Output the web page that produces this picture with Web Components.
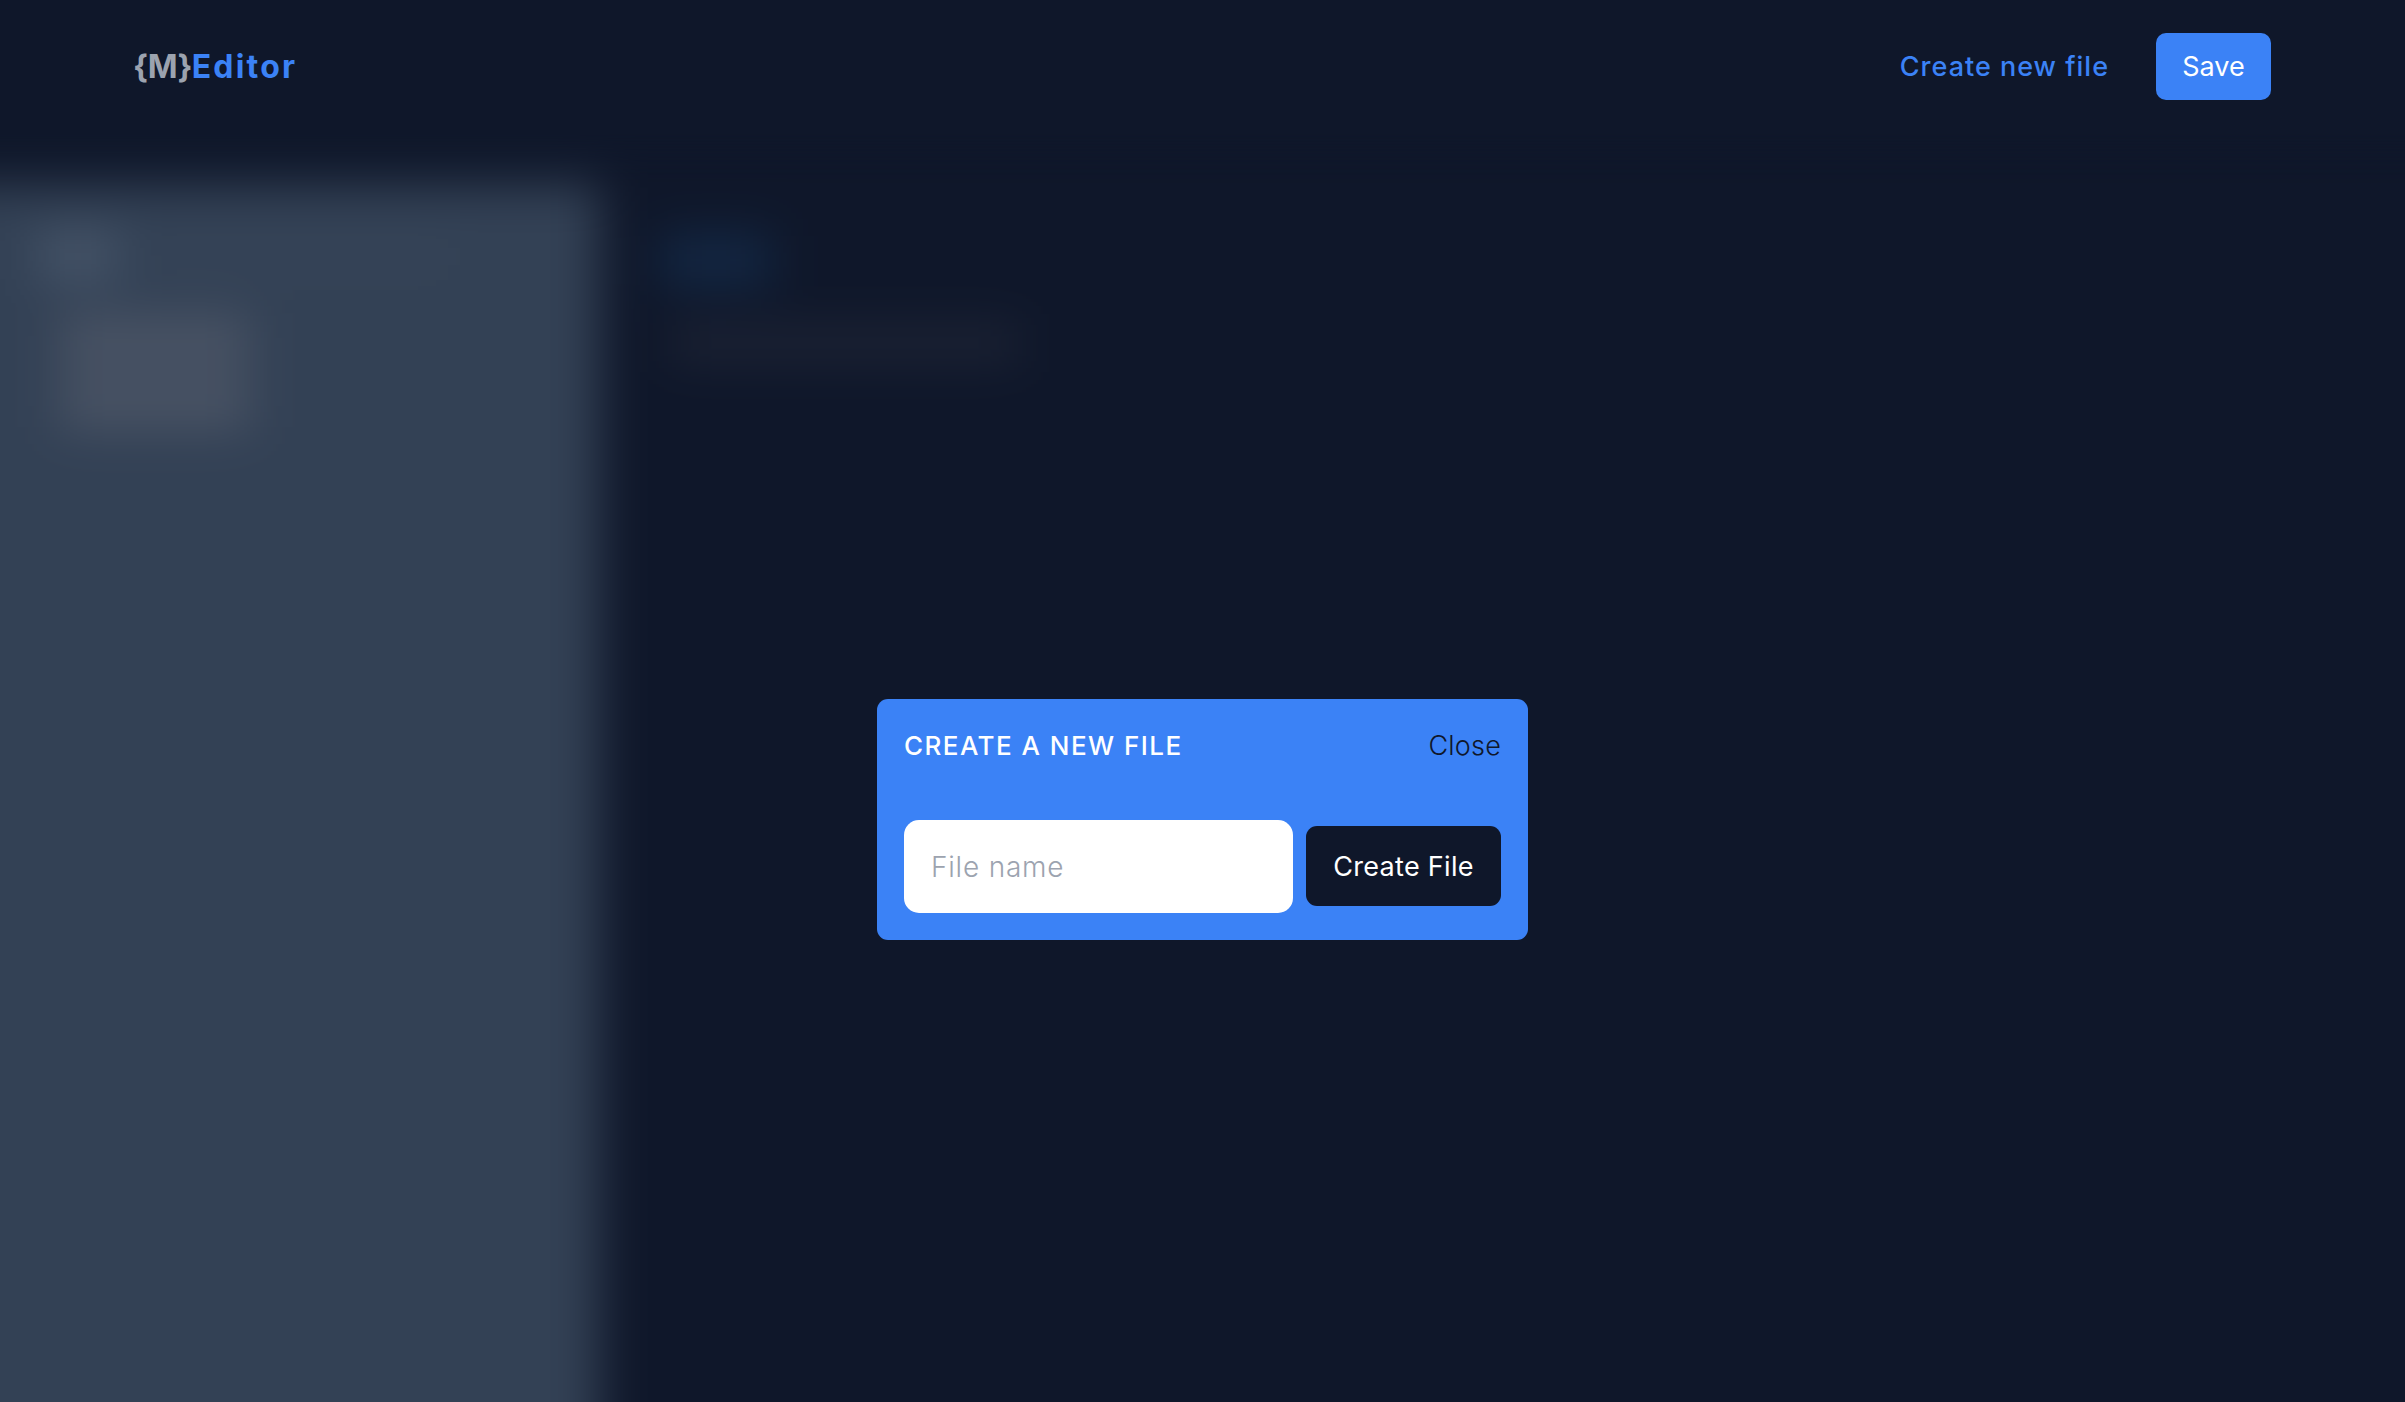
<!DOCTYPE html>
<html lang="en">
<head>
<meta charset="utf-8">
<title>MEditor</title>
<style>
  html, body { margin: 0; height: 100%; background: #0f172a; overflow: hidden; }
  body { font-family: Inter, "Liberation Sans", sans-serif; }
</style>
</head>
<body>
<editor-app>
  <editor-header></editor-header>
  <editor-workspace></editor-workspace>
  <new-file-modal></new-file-modal>
</editor-app>

<script>
// page shell
class EditorApp extends HTMLElement {
  constructor() {
    super();
    this.attachShadow({ mode: 'open' });
    this.shadowRoot.innerHTML = `
      <style>
        :host { display: block; position: relative; height: 1402px; overflow: hidden; background: #0f172a; }
      </style>
      <slot></slot>
    `;
  }
}

// top bar with logo and actions
class EditorHeader extends HTMLElement {
  constructor() {
    super();
    this.attachShadow({ mode: 'open' });
    this.shadowRoot.innerHTML = `
      <style>
        :host { display: flex; position: relative; z-index: 1; align-items: center; justify-content: space-between; height: 134px; box-sizing: border-box; padding: 0 134px 1px 133px; background: #0f172a; }
        .logo { font-size: 32px; font-weight: 700; color: #3b82f6; letter-spacing: 2.2px; }
        .logo span { color: #9ca3af; letter-spacing: -.75px; }
        nav { display: flex; align-items: center; gap: 47px; }
        a { font-size: 27px; font-weight: 500; color: #3b82f6; text-decoration: none; letter-spacing: 1px; }
        button { font: inherit; font-size: 27px; color: #fff; background: #3b82f6; border: 0; border-radius: 10px; width: 115px; height: 67px; padding: 0; }
      </style>
      <div class="logo"><span>{M}</span>Editor</div>
      <nav>
        <a href="#">Create new file</a>
        <button>Save</button>
      </nav>
    `;
  }
}

// sidebar and preview, blurred behind the dialog. runs past the page edges
// so the blur does not fade out there
class EditorWorkspace extends HTMLElement {
  constructor() {
    super();
    this.attachShadow({ mode: 'open' });
    this.shadowRoot.innerHTML = `
      <style>
        :host { display: grid; grid-template-columns: 719px 1fr; box-sizing: border-box; height: 1388px; padding-top: 50px; margin: 0 -120px; background: #0f172a; filter: blur(24px); }
        .side { background: #334155; padding: 48px 0 0 158px; display: flex; flex-direction: column; }
        .head { display: flex; gap: 30px; align-items: center; }
        .title { width: 80px; height: 48px; background: #465569; }
        .rule { width: 300px; height: 16px; background: #384659; }
        .rows { display: flex; flex-direction: column; gap: 12px; margin: 36px 0 0 22px; }
        .rows i { display: block; width: 190px; height: 50px; background: #4a5465; }
        .main { padding: 51px 0 0 61px; display: flex; flex-direction: column; gap: 43px; }
        .badge { width: 112px; height: 50px; background: #132845; }
        .line { width: 350px; height: 30px; margin-left: 10px; background: #1f2536; }
      </style>
      <div class="side">
        <div class="head"><div class="title"></div><div class="rule"></div></div>
        <div class="rows"><i></i><i></i></div>
      </div>
      <div class="main">
        <div class="badge"></div>
        <div class="line"></div>
      </div>
    `;
  }
}

// dialog over the blurred workspace
class NewFileModal extends HTMLElement {
  constructor() {
    super();
    this.attachShadow({ mode: 'open' });
    this.shadowRoot.innerHTML = `
      <style>
        :host { position: absolute; top: 134px; left: 0; right: 0; bottom: 0; display: flex; justify-content: center; align-items: flex-start; padding-top: 565px; box-sizing: border-box; }
        .card { width: 651px; height: 241px; box-sizing: border-box; padding: 0 27px; background: #3b82f6; border-radius: 11px; }
        .top { display: flex; justify-content: space-between; align-items: center; height: 92px; }
        h2 { margin: 0; font-size: 26px; font-weight: 500; color: #fff; letter-spacing: 1.45px; }
        .close { font-size: 27px; font-weight: 300; color: #0f172a; letter-spacing: .2px; }
        .row { display: flex; align-items: center; gap: 13px; margin-top: 29px; }
        input { flex: 1; min-width: 0; height: 93px; box-sizing: border-box; border: 0; border-radius: 15px; padding: 0 27px; background: #fff; font: inherit; font-size: 28px; font-weight: 300; letter-spacing: .8px; outline: none; }
        input::placeholder { color: #9ca3af; opacity: 1; }
        button { width: 195px; height: 80px; margin-bottom: 1px; border: 0; border-radius: 11px; padding: 0; background: #0f172a; color: #fff; font: inherit; font-size: 27px; font-weight: 400; letter-spacing: .3px; }
      </style>
      <div class="card">
        <div class="top">
          <h2>CREATE A NEW FILE</h2>
          <span class="close">Close</span>
        </div>
        <div class="row">
          <input type="text" placeholder="File name">
          <button>Create File</button>
        </div>
      </div>
    `;
  }
}

customElements.define('editor-app', EditorApp);
customElements.define('editor-header', EditorHeader);
customElements.define('editor-workspace', EditorWorkspace);
customElements.define('new-file-modal', NewFileModal);
</script>
</body>
</html>
